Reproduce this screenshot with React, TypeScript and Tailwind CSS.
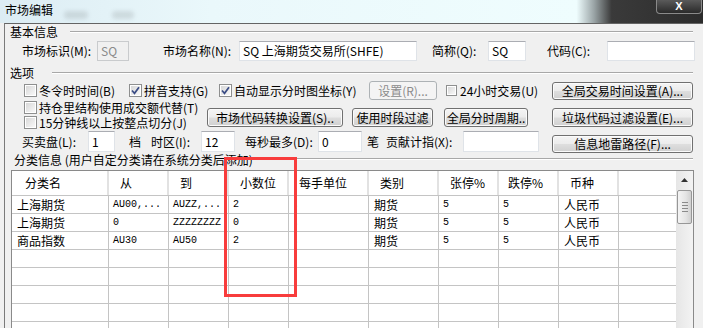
import type { ReactNode } from 'react'

type Cell = string

const rows: Cell[][] = [
  ['上海期货', 'AU00,...', 'AUZZ,...', '2', '.', '期货', '5', '5', '人民币'],
  ['上海期货', '0', 'ZZZZZZZZ', '0', '.', '期货', '5', '5', '人民币'],
  ['商品指数', 'AU30', 'AU50', '2', '.', '期货', '5', '5', '人民币'],
  [], [], [], [], [], [],
]

// 列宽（含右边框）与表头
const cols = [
  { w: 'w-[97px]', head: '分类名', hp: 'pl-[13px]', mono: false },
  { w: 'w-[60px]', head: '从', hp: 'pl-[11px]', mono: true },
  { w: 'w-[60px]', head: '到', hp: 'pl-[11px]', mono: true },
  { w: 'w-[60px]', head: '小数位', hp: 'pl-[11px]', mono: true },
  { w: 'w-[80px]', head: '每手单位', hp: 'pl-[10px]', mono: true },
  { w: 'w-[70px]', head: '类别', hp: 'pl-[11px]', mono: false },
  { w: 'w-[60px]', head: '张停%', hp: 'pl-[11px]', mono: true },
  { w: 'w-[60px]', head: '跌停%', hp: 'pl-[9px]', mono: true },
  { w: 'w-[60px]', head: '币种', hp: 'pl-[11px]', mono: false },
]

function Box({ checked = false, small = false }: { checked?: boolean; small?: boolean }) {
  return (
    <span className={`flex shrink-0 items-center justify-center border border-[#8e8f8f] bg-white p-px ${small ? 'h-[11px] w-[11px]' : 'h-[13px] w-[13px]'}`}>
      <span className="relative flex h-full w-full items-center justify-center bg-[linear-gradient(135deg,#d8d8d8,#f8f8f8)]">
        {checked && (
          <svg width="9" height="9" viewBox="0 0 9 9" className="absolute">
            <path d="M1 4.5 L3.5 7.3 L8 1.2" fill="none" stroke="#3a4c85" strokeWidth="1.7" />
          </svg>
        )}
      </span>
    </span>
  )
}

function Check({ label, checked, small, className = '' }: { label: string; checked?: boolean; small?: boolean; className?: string }) {
  return (
    <div className={`flex shrink-0 items-center whitespace-nowrap ${className}`}>
      <Box checked={checked} small={small} />
      <span className={`block h-[12px] leading-[12px] ${small ? 'ml-[3px]' : 'ml-[2px]'}`}>{label}</span>
    </div>
  )
}

function Btn({ children, disabled, className = '' }: { children: ReactNode; disabled?: boolean; className?: string }) {
  return (
    <button
      className={`flex shrink-0 items-center justify-center whitespace-nowrap rounded-[3px] border leading-none ${
        disabled
          ? 'border-[#adb2b5] bg-[#f4f4f4] text-[#8b8b8b]'
          : 'border-[#707070] bg-[linear-gradient(to_bottom,#f4f4f4_0%,#ececec_48%,#dedede_52%,#d0d0d0_100%)] text-black shadow-[inset_0_0_0_1px_#fbfbfb]'
      } ${className}`}
    >
      {children}
    </button>
  )
}

function Field({ value = '', disabled, className = '' }: { value?: string; disabled?: boolean; className?: string }) {
  return (
    <div
      className={`flex shrink-0 items-center whitespace-nowrap border px-[3px] leading-none ${
        disabled
          ? 'border-[#c9cbcd] bg-[#f0f0f0] text-[#8a8a8a]'
          : 'border-[#dfe3e8] border-t-[#abadb3] bg-white text-black'
      } ${className}`}
    >
      {value}
    </div>
  )
}

function GroupTitle({ title, lineLeft, className = '' }: { title: string; lineLeft: string; className?: string }) {
  return (
    <div className={`flex h-[14px] items-center ${className}`}>
      <span className="ml-[5px] whitespace-nowrap leading-[14px]">{title}</span>
      <div className={`mr-[10px] h-[2px] flex-1 border-t border-b border-t-[#a8a8a8] border-b-white ${lineLeft}`} />
    </div>
  )
}

export default function App() {
  return (
    <div className="relative h-[328px] w-[703px] overflow-hidden bg-[#f0f0f0] font-['Noto_Sans_CJK_SC','Liberation_Sans',sans-serif] text-[12px] leading-[14px] text-black">
      {/* 标题栏 */}
      <div className="relative flex h-[23px] items-start justify-between bg-[linear-gradient(to_right,#dcecf3_0%,#eaf8fb_30%,#effdfe_82%,#9aa4a6_84.5%,#3a3a3a_87%,#2c2c2c_100%)]">
        <span className="ml-[5px] mt-[3px] text-[12px] leading-[14px]">市场编辑</span>
        <span className="absolute left-[64px] top-[11px] h-[8px] w-[24px] rounded-full bg-black/10 blur-[2px]" />
        <span className="absolute left-[112px] top-[11px] h-[8px] w-[22px] rounded-full bg-black/10 blur-[2px]" />
        <div className="mr-[1px] flex h-[14px] w-[46px] items-center justify-center rounded-b-[4px] border border-t-0 border-[#8a8a8a] bg-[linear-gradient(to_bottom,#5a5a5a,#2a2a2a)]">
          <span className="font-['Liberation_Sans',sans-serif] text-[11px] font-bold leading-none text-white">X</span>
        </div>
      </div>

      {/* 主体 */}
      <div className="ml-[4px] flex h-[305px] flex-col border-l border-t border-l-[#7a7a7a] border-t-[#646464]">
        <GroupTitle title="基本信息" lineLeft="ml-[12px]" className="mt-[1px]" />

        <div className="mt-[2px] flex h-[20px] items-center pl-[17px]">
          <span className="w-[75px] shrink-0 whitespace-nowrap">市场标识(M):</span>
          <Field value="SQ" disabled className="h-[20px] w-[32px]" />
          <span className="ml-[34px] w-[76px] shrink-0 whitespace-nowrap">市场名称(N):</span>
          <Field value="SQ 上海期货交易所(SHFE)" className="h-[20px] w-[178px]" />
          <span className="ml-[15px] w-[56px] shrink-0 whitespace-nowrap">简称(Q):</span>
          <Field value="SQ" className="h-[20px] w-[38px]" />
          <span className="ml-[21px] w-[60px] shrink-0 whitespace-nowrap">代码(C):</span>
          <Field className="h-[20px] w-[88px]" />
        </div>

        <GroupTitle title="选项" lineLeft="ml-[18px]" className="mt-[5px]" />

        {/* 选项第一行 */}
        <div className="mt-[1px] flex h-[19px] items-center pl-[19px]">
          <Check label="冬令时时间(B)" className="w-[105px]" />
          <Check label="拼音支持(G)" checked className="w-[90px]" />
          <Check label="自动显示分时图坐标(Y)" checked className="w-[150px]" />
          <Btn disabled className="h-[19px] w-[68px]">设置(R)...</Btn>
          <Check label="24小时交易(U)" small className="ml-[9px] w-[106px]" />
          <Btn className="h-[18px] w-[141px]">全局交易时间设置(A)...</Btn>
        </div>

        {/* 选项第二、三行 */}
        <div className="flex h-[30px] items-start pl-[19px]">
          <div className="flex w-[183px] shrink-0 flex-col">
            <Check label="持仓里结构使用成交额代替(T)" className="h-[15px]" />
            <Check label="15分钟线以上按整点切分(J)" className="h-[15px]" />
          </div>
          <Btn className="mt-[8px] h-[19px] w-[136px]">市场代码转换设置(S)..</Btn>
          <Btn className="ml-[9px] mt-[8px] h-[19px] w-[81px]">使用时段过滤</Btn>
          <Btn className="ml-[11px] mt-[8px] h-[19px] w-[84px]">全局分时周期..</Btn>
          <Btn className="ml-[24px] mt-[8px] h-[19px] w-[141px]">垃圾代码过滤设置(E)...</Btn>
        </div>

        {/* 选项第四行 */}
        <div className="flex h-[23px] items-start pl-[17px]">
          <div className="mt-[1px] flex h-[21px] items-center">
            <span className="w-[66px] shrink-0 whitespace-nowrap">买卖盘(L):</span>
            <Field value="1" className="h-[21px] w-[27px]" />
            <span className="ml-[14px] shrink-0">档</span>
            <span className="ml-[10px] w-[50px] shrink-0 whitespace-nowrap">时区(I):</span>
            <Field value="12" className="h-[21px] w-[34px]" />
            <span className="ml-[10px] w-[73px] shrink-0 whitespace-nowrap">每秒最多(D):</span>
            <Field value="0" className="h-[21px] w-[44px]" />
            <span className="ml-[5px] shrink-0">笔</span>
            <span className="ml-[7px] w-[77px] shrink-0 whitespace-nowrap">贡献计指(X):</span>
            <Field className="h-[21px] w-[76px]" />
          </div>
          <Btn className="ml-[13px] mt-[5px] h-[18px] w-[141px]">信息地雷路径(F)...</Btn>
        </div>

        <div className="flex h-[14px] items-center">
          <span className="ml-[9px] whitespace-nowrap leading-[14px]">分类信息 (用户自定分类请在系统分类后添加)</span>
          <div className="ml-[4px] mr-[10px] -mt-[2px] h-[2px] flex-1 border-t border-b border-t-[#a8a8a8] border-b-white" />
        </div>

        {/* 分类表格 */}
        <div className="ml-[6px] mt-[3px] flex w-[683px] flex-1 border border-b-0 border-[#8a8a8a]">
          <div className="flex w-[664px] flex-col bg-white">
            <div className="flex h-[25px] shrink-0 border-b border-[#c4c4c4]">
              {cols.map(c => (
                <div key={c.head} className={`${c.w} ${c.hp} flex shrink-0 items-center border-r-2 border-[#e2e2e2] whitespace-nowrap`}>
                  {c.head}
                </div>
              ))}
              <div className="flex-1" />
            </div>
            {rows.map((r, i) => (
              <div key={i} className="flex h-[18px] shrink-0 border-b border-[#c4c4c4]">
                {cols.map((c, j) => (
                  <div
                    key={j}
                    className={`${c.w} flex shrink-0 items-center overflow-hidden whitespace-nowrap border-r border-[#c4c4c4] ${
                      c.mono ? "pl-[4px] font-['Liberation_Mono','Noto_Sans_CJK_SC',monospace] text-[10px]" : 'pl-[5px]'
                    }`}
                  >
                    {r[j] ?? ''}
                  </div>
                ))}
                <div className="flex-1" />
              </div>
            ))}
          </div>

          {/* 滚动条 */}
          <div className="flex w-[17px] flex-col items-center bg-[linear-gradient(to_right,#e6e6e6,#f3f3f3)]">
            <div className="flex h-[18px] w-full items-center justify-center">
              <svg width="7" height="4" viewBox="0 0 7 4">
                <path d="M3.5 0 L7 4 L0 4 Z" fill="#333" />
              </svg>
            </div>
            <div className="mt-[1px] flex h-[34px] w-[15px] flex-col items-center justify-center gap-[2px] rounded-[2px] border border-[#979797] bg-[linear-gradient(to_right,#f4f4f4,#e4e4e4_60%,#d0d0d0)]">
              <span className="h-px w-[6px] bg-[#8a8a8a]" />
              <span className="h-px w-[6px] bg-[#8a8a8a]" />
              <span className="h-px w-[6px] bg-[#8a8a8a]" />
              <span className="h-px w-[6px] bg-[#8a8a8a]" />
            </div>
          </div>
        </div>
      </div>

      {/* 红色标注框 */}
      <div className="pointer-events-none absolute left-[224px] top-[157px] h-[140px] w-[73px] border-[3px] border-[#f83c3c]" />
    </div>
  )
}
